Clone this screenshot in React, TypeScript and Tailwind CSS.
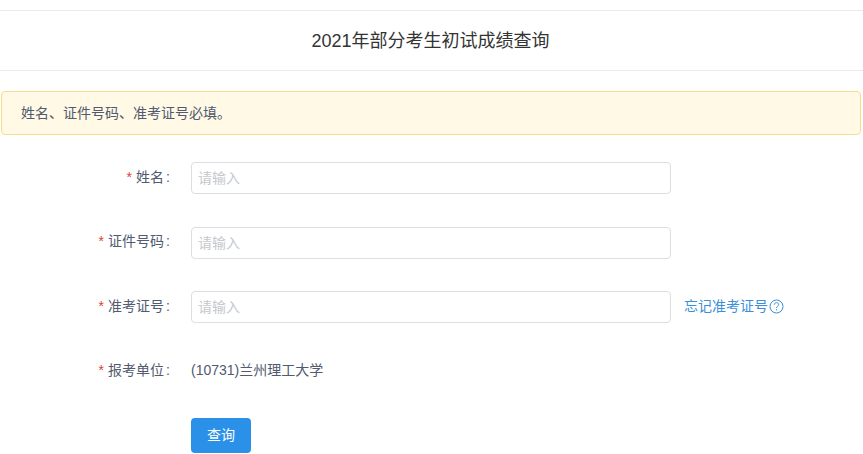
import React from "react";

const font = { fontFamily: '"Liberation Sans", Arial, "Noto Sans CJK SC", sans-serif' };

function Label({ text, up }: { text: string; up?: boolean }) {
  return (
    <label className={`w-[171px] shrink-0 flex justify-end items-center text-[14px] text-[#515a6e] leading-[32px] whitespace-nowrap ${up ? "-translate-y-[2px]" : "-translate-y-px"}`}>
      <span className="text-[#d9452c] mr-[4px] text-[14px]">*</span>
      {text}
      <span className="ml-[2px] w-[5px]">:</span>
    </label>
  );
}

function Field({ label, mb, up, children }: { label: string; mb: string; up?: boolean; children?: React.ReactNode }) {
  return (
    <div className={`flex items-center ${mb}`}>
      <Label text={label} up={up} />
      <input
        placeholder="请输入"
        className="ml-[20px] w-[480px] h-[32px] rounded-[4px] border border-[#dcdee2] bg-white px-[6px] text-[14px] placeholder:text-[#c5c8ce] outline-none"
      />
      {children}
    </div>
  );
}

export default function App() {
  return (
    <div className="w-[863px] h-[454px] bg-white overflow-hidden" style={font}>
      <div className="h-[10px]" />
      <div className="h-[61px] border-y border-[#e8eaec] flex items-center justify-center pr-[2px] pt-[2px] text-[18px] text-[#333]">
        2021年部分考生初试成绩查询
      </div>
      <div className="mt-[20px] ml-[1px] w-[860px] h-[44px] rounded-[4px] border border-[#f5dc8f] bg-[#fff9e6] flex items-center pl-[19px] text-[14px] text-[#515a6e]">
        姓名、证件号码、准考证号必填。
      </div>
      <div className="mt-[27px]">
        <Field label="姓名" mb="mb-[33px]" />
        <Field label="证件号码" mb="mb-[32px]" up />
        <Field label="准考证号" mb="mb-[32px]">
          <a className="ml-[13px] flex items-center text-[14px] text-[#3b8fd8] -translate-y-px">
            忘记准考证号
            <svg width="15" height="15" viewBox="0 0 15 15" fill="none" stroke="#3b8fd8" strokeWidth="1" className="ml-px">
              <circle cx="7.5" cy="7.5" r="6.5" />
              <path d="M5.3 5.8c0-1.4 1-2.2 2.2-2.2s2.2.8 2.2 2c0 1.6-2.2 1.7-2.2 3.4" />
              <path d="M7.5 10.2v1.2" />
            </svg>
          </a>
        </Field>
        <div className="flex items-center mb-[31px]">
          <Label text="报考单位" />
          <span className="ml-[20px] text-[14px] text-[#515a6e] -translate-y-px">(10731)兰州理工大学</span>
        </div>
        <div className="pl-[191px]">
          <button className="w-[60px] h-[35px] rounded-[4px] bg-[#2b91e8] text-white text-[14px]">查询</button>
        </div>
      </div>
    </div>
  );
}
